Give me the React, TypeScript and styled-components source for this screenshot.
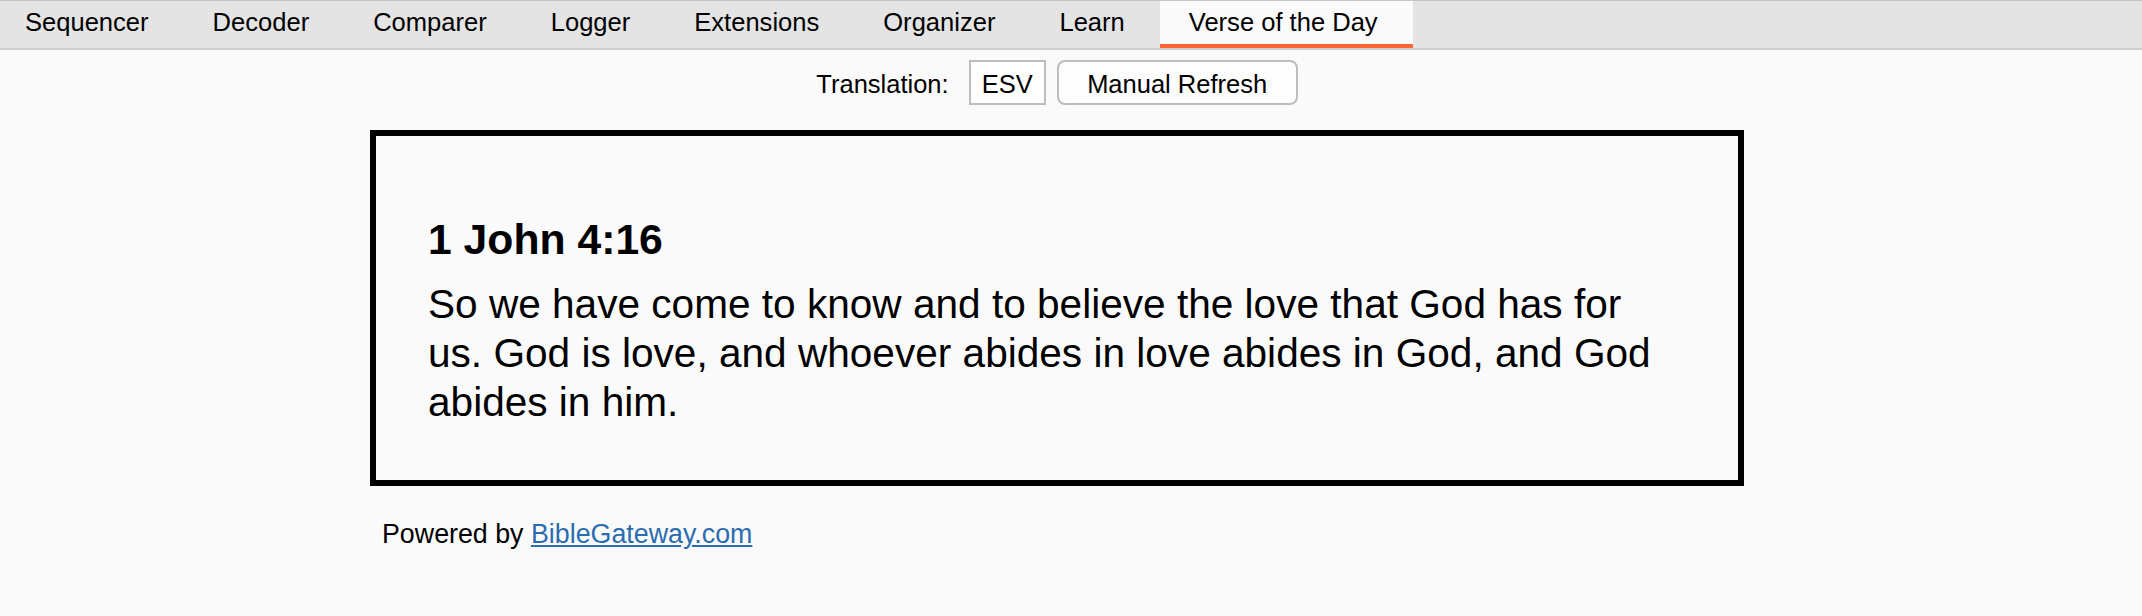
import React from "react";
import styled, { createGlobalStyle } from "styled-components";

const fontStack = `"Liberation Sans", Arial, Helvetica, sans-serif`;
const colourPage = "#fafafa";
const colourTabBar = "#e4e4e4";
const colourAccent = "#ff6633";
const colourControlBorder = "#bdbdbd";
const colourLink = "#2b6cb0";

const GlobalStyle = createGlobalStyle`
  html, body {
    margin: 0;
    padding: 0;
    background: ${colourPage};
    font-family: ${fontStack};
    color: #000;
  }
`;

const Page = styled.div`
  width: 2142px;
  min-height: 616px;
  background: ${colourPage};
`;

const TabBar = styled.nav`
  display: flex;
  align-items: stretch;
  height: 50px;
  box-sizing: border-box;
  background: ${colourTabBar};
  border-top: 1px solid #c6c6c6;
  border-bottom: 2px solid #ccd0cf;
`;

const Tab = styled.div<{ active?: boolean }>`
  display: flex;
  align-items: center;
  box-sizing: border-box;
  padding: 0 35px 0 29px;
  font-size: 25.55px;
  white-space: nowrap;
  cursor: pointer;
  background: ${props => props.active ? colourPage : "transparent"};
  border-bottom: 4px solid ${props => props.active ? colourAccent : "transparent"};

  &:first-child {
    padding-left: 25px;
  }
`;

const Content = styled.main`
  display: flex;
  flex-direction: column;
  align-items: center;
  padding-right: 28px;
`;

const Toolbar = styled.div`
  display: flex;
  align-items: center;
  margin-top: 10px;
  height: 45px;
  font-size: 25.5px;
`;

const Label = styled.span`
  margin-right: 20px;
  padding-top: 3px;
`;

const TranslationField = styled.div`
  display: flex;
  align-items: center;
  justify-content: center;
  box-sizing: border-box;
  width: 77px;
  height: 45px;
  padding-top: 4px;
  background: #fff;
  border: 2px solid ${colourControlBorder};
  margin-right: 11px;
`;

const Button = styled.button`
  display: flex;
  align-items: center;
  justify-content: center;
  box-sizing: border-box;
  width: 241px;
  height: 45px;
  padding: 4px 0 0;
  font-family: ${fontStack};
  font-size: 25.5px;
  color: #000;
  background: #fdfdfd;
  border: 2px solid ${colourControlBorder};
  border-radius: 8px;
`;

const Column = styled.div`
  width: 1374px;
  margin-top: 25px;
`;

const VerseCard = styled.section`
  box-sizing: border-box;
  width: 100%;
  height: 356px;
  border: 6px solid #000;
  padding: 79px 60px 0 52px;
`;

const Reference = styled.h2`
  margin: 0;
  font-size: 42.7px;
  line-height: 48px;
  font-weight: 700;
`;

const VerseText = styled.p`
  margin: 17px 0 0;
  font-size: 40.6px;
  line-height: 49px;
`;

const Footer = styled.div`
  margin-top: 33px;
  padding-left: 12px;
  font-size: 26.8px;
  line-height: 30px;
`;

const Link = styled.a`
  color: ${colourLink};
  text-decoration: underline;
`;

const tabs = [
  "Sequencer",
  "Decoder",
  "Comparer",
  "Logger",
  "Extensions",
  "Organizer",
  "Learn",
  "Verse of the Day",
];

export default function App() {
  return (
    <Page>
      <GlobalStyle />
      <TabBar>
        {tabs.map(name => (
          <Tab key={name} active={name === "Verse of the Day"}>{name}</Tab>
        ))}
      </TabBar>
      <Content>
        <Toolbar>
          <Label>Translation:</Label>
          <TranslationField>ESV</TranslationField>
          <Button>Manual Refresh</Button>
        </Toolbar>
        <Column>
          <VerseCard>
            <Reference>1 John 4:16</Reference>
            <VerseText>
              So we have come to know and to believe the love that God has for us. God is love, and whoever abides in love abides in God, and God abides in him.
            </VerseText>
          </VerseCard>
          <Footer>
            Powered by <Link href="#">BibleGateway.com</Link>
          </Footer>
        </Column>
      </Content>
    </Page>
  );
}
